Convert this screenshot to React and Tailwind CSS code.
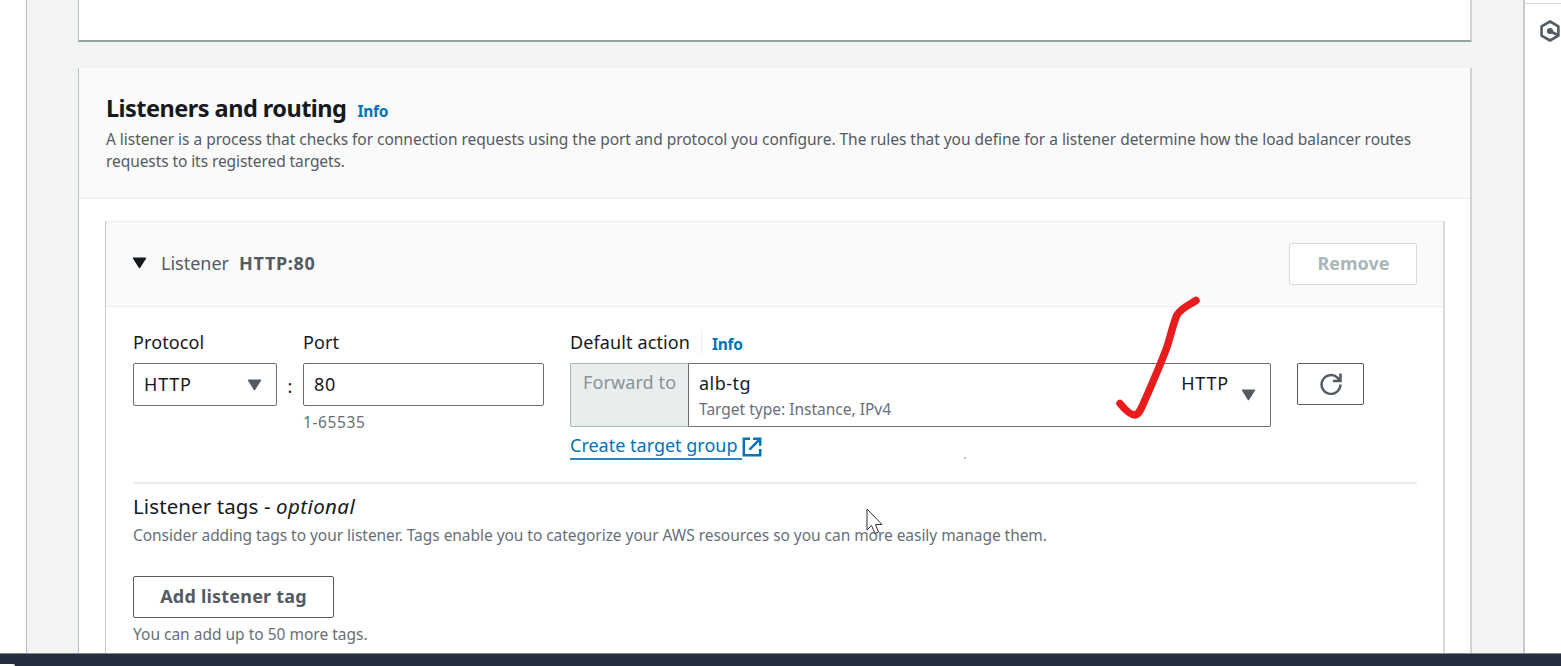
function Caret({ className = "" }) {
  return (
    <svg className={`h-[12px] w-[15px] shrink-0 ${className}`} viewBox="0 0 15 12">
      <path d="M1.5 1.2h12L7.5 10.6z" fill="currentColor" stroke="currentColor" strokeWidth="1.4" strokeLinejoin="round" />
    </svg>
  );
}

function ExternalIcon() {
  return (
    <svg className="h-[20px] w-[20px] shrink-0" viewBox="0 0 20 20" fill="none" stroke="currentColor" strokeWidth="2.5">
      <path d="M8 1.8H1.8v16.4h16.4V12" />
      <path d="M11.2 1.8h7v7M17.9 2.1L7.4 12.6" />
    </svg>
  );
}

function RefreshIcon() {
  return (
    <svg className="h-[22px] w-[22px] shrink-0" viewBox="0 0 22 22" fill="none" stroke="currentColor" strokeWidth="2.5">
      <path d="M20.4 11.4A9.4 9.4 0 1 1 17.4 4.600L19.500 6.800" />
      <path d="M20.500 0.600v7.500h-7.600" />
      <path d="M20.500 3.400v4.700h-4.700z" fill="currentColor" stroke="none" />
    </svg>
  );
}

function HexIcon() {
  return (
    <svg className="h-[22px] w-[20px] shrink-0" viewBox="0 0 20 22" fill="none" stroke="currentColor" strokeWidth="2.6">
      <path d="M10 1.5l8.400 4.800v9.400L10 20.500l-8.400-4.800V6.300z" strokeLinejoin="round" />
      <path d="M10 11l7.500 4" />
      <circle cx="10" cy="11" r="3.100" fill="currentColor" stroke="none" />
    </svg>
  );
}

function InfoLink({ className = "" }) {
  return <a className={`text-[15.5px] font-bold tracking-[-0.3px] text-[#0073bb] ${className}`}>Info</a>;
}

function Label({ children }) {
  return <span className="text-[18px] leading-[26px] tracking-[0.12px]">{children}</span>;
}

const card = "border-l border-r-2 border-l-[#bcc2c2] border-r-[#d0d3d3] bg-white";

function ListenerHeader() {
  return (
    <div className="flex h-[86px] items-center justify-between border-y border-[#eaeded] bg-[#fafafa] pl-[27px] pr-[26px] text-[18px] text-[#545b64]">
      <div className="flex items-center pb-[2px]">
        <Caret className="-ml-px text-[#16191f]" />
        <span className="ml-[14px]">Listener</span>
        <span className="ml-[10px] font-bold tracking-[0.65px]">HTTP:80</span>
      </div>
      <button className="h-[42px] w-[128px] rounded-[2px] border border-[#d5dbdb] bg-white pb-[2px] pl-[1px] font-bold text-[#aab7b8]">Remove</button>
    </div>
  );
}

function TargetSelect() {
  return (
    <div className="flex h-[64px] w-[701px]">
      <div className="w-[118px] rounded-l-[2px] border border-r-0 border-[#aab7b8] bg-[#eaeded] pt-[5px] pl-[12px] text-[18px] leading-[26px] tracking-[0.1px] text-[#879596]">
        Forward to
      </div>
      <div className="flex flex-1 rounded-r-[2px] border border-[#687078] pl-[10px] pr-[14px]">
        <div className="flex flex-1 flex-col pt-[6px]">
          <span className="text-[18px] leading-[26px] tracking-[0.5px]">alb-tg</span>
          <span className="text-[15.5px] leading-[26px] text-[#687078]">Target type: Instance, IPv4</span>
        </div>
        <span className="mr-[12px] pt-[6px] text-[18px] leading-[26px] tracking-[0.8px]">HTTP</span>
        <Caret className="mt-[25px] text-[#545b64]" />
      </div>
    </div>
  );
}

function ListenerForm() {
  return (
    <div className="flex h-[153px]">
      <div className="flex w-[144px] flex-col">
        <Label>Protocol</Label>
        <div className="mt-[8px] flex h-[43px] items-center justify-between rounded-[2px] border border-[#687078] pl-[10px] pr-[14px] text-[18px] tracking-[0.8px]">
          HTTP
          <Caret className="text-[#545b64]" />
        </div>
      </div>
      <span className="w-[26px] pt-[43px] text-center text-[18px] leading-[28px]">:</span>
      <div className="flex w-[241px] flex-col">
        <Label>Port</Label>
        <div className="mt-[8px] flex h-[43px] items-center rounded-[2px] border border-[#687078] pl-[10px] text-[18px] tracking-[0.8px]">80</div>
        <span className="mt-[3px] text-[15.5px] leading-[26px] tracking-[0.6px] text-[#687078]">1-65535</span>
      </div>
      <div className="ml-[26px] flex flex-col items-start">
        <div className="flex items-center">
          <Label>Default action</Label>
          <span className="ml-[11px] mr-[10px] h-[24px] w-px bg-[#eaeded]" />
          <InfoLink className="pt-[3px] leading-[22px]" />
        </div>
        <div className="mt-[8px]">
          <TargetSelect />
        </div>
        <a className="mt-[6px] flex items-center text-[18px] text-[#0073bb]">
          <span className="border-b-2 border-[#2b87c4] pr-[4px] leading-[25px]">Create target group</span>
          <ExternalIcon />
        </a>
      </div>
      <button className="ml-[26px] mt-[34px] flex h-[42px] w-[67px] items-center justify-center rounded-[2px] border border-[#545b64] text-[#545b64]">
        <RefreshIcon />
      </button>
    </div>
  );
}

function ListenerTags() {
  return (
    <div className="flex flex-col items-start border-t-2 border-[#eaeded] pt-[8px]">
      <h3 className="text-[20.5px] leading-[28px] tracking-[0.1px]">
        Listener tags - <em className="tracking-[0.4px]">optional</em>
      </h3>
      <p className="mt-[2px] text-[15.5px] leading-[26px] tracking-[-0.045px] text-[#687078]">
        Consider adding tags to your listener. Tags enable you to categorize your AWS resources so you can more easily manage them.
      </p>
      <button className="mt-[28px] h-[42px] w-[201px] rounded-[2px] border border-[#545b64] pb-[2px] text-[18px] font-bold tracking-[0.2px] text-[#545b64]">Add listener tag</button>
      <p className="mt-[3px] text-[15.5px] leading-[26px] text-[#687078]">You can add up to 50 more tags.</p>
    </div>
  );
}

export default function App() {
  return (
    <div className="relative flex h-[666px] w-[1561px] flex-col overflow-hidden bg-white font-['Noto_Sans',sans-serif] text-[#16191f]">
      <div className="flex h-[653px] shrink-0 overflow-hidden">
        <aside className="w-[27px] shrink-0 border-r border-[#b9bfbf] bg-white" />
        <main className="w-[1496px] shrink-0 bg-[#f2f3f3] pl-[51px]">
          <section className={`h-[42px] w-[1394px] border-b-2 border-b-[#95a09f] ${card}`} />
          <section className={`mt-[26px] h-[640px] w-[1394px] ${card}`}>
            <header className="h-[131px] border-b border-[#eaeded] bg-[#fafafa] px-[27px] pt-[25px]">
              <div className="flex h-[30px] items-baseline">
                <h2 className="text-[23.5px] font-bold leading-[30px] tracking-[-0.53px]">Listeners and routing</h2>
                <InfoLink className="ml-[11px]" />
              </div>
              <p className="mt-[6px] whitespace-nowrap text-[15.5px] leading-[21.5px] tracking-[-0.03px] text-[#545b64]">
                A listener is a process that checks for connection requests using the port and protocol you configure. The rules that you define for a listener determine how the load balancer routes
                <br />
                <span className="tracking-[-0.08px]">requests to its registered targets.</span>
              </p>
            </header>
            <div className="ml-[26px] mt-[22px] h-[500px] w-[1340px] border-l border-r-2 border-l-[#c4caca] border-r-[#d8dbdb]">
              <ListenerHeader />
              <div className="pl-[27px] pr-[26px] pt-[22px]">
                <ListenerForm />
                <ListenerTags />
              </div>
            </div>
          </section>
        </main>
        <aside className="flex-1 border-l-2 border-[#c6caca] bg-white">
          <div className="h-[4px] border-b border-[#d5dbdb]" />
          <div className="pl-[15px] pt-[16px] text-[#545b64]">
            <HexIcon />
          </div>
        </aside>
      </div>
      <footer className="flex flex-1 items-end border-t border-[#7c868c] bg-[#232f3e]">
        <div className="h-[2px] w-[15px] rounded-tr-[4px] bg-white" />
      </footer>
      <svg className="absolute left-[1110px] top-[290px] h-[135px] w-[95px]" viewBox="1110 290 95 135" fill="none" stroke="#e81c1c" strokeWidth="7.5" strokeLinecap="round" strokeLinejoin="round">
        <path d="M1120 403.5C1126 411 1131 415 1135 415C1138.500 414.500 1140 411 1143 404.500C1152 384 1160 366 1167 347C1171 334 1174 321 1177 315C1181 308 1189 305 1196 300.500" />
      </svg>
      <svg className="absolute left-[866px] top-[508px] h-[28px] w-[18px]" viewBox="0 0 18 28">
        <path d="M1 1v21l4.500-4.500L9 25.500l3.500-1.500L9.500 16.500H16z" fill="#fff" stroke="#333" strokeWidth="1" />
      </svg>
      <span className="absolute left-[964px] top-[457px] h-[2px] w-[2px] bg-[#c4c8c8]" />
    </div>
  );
}
